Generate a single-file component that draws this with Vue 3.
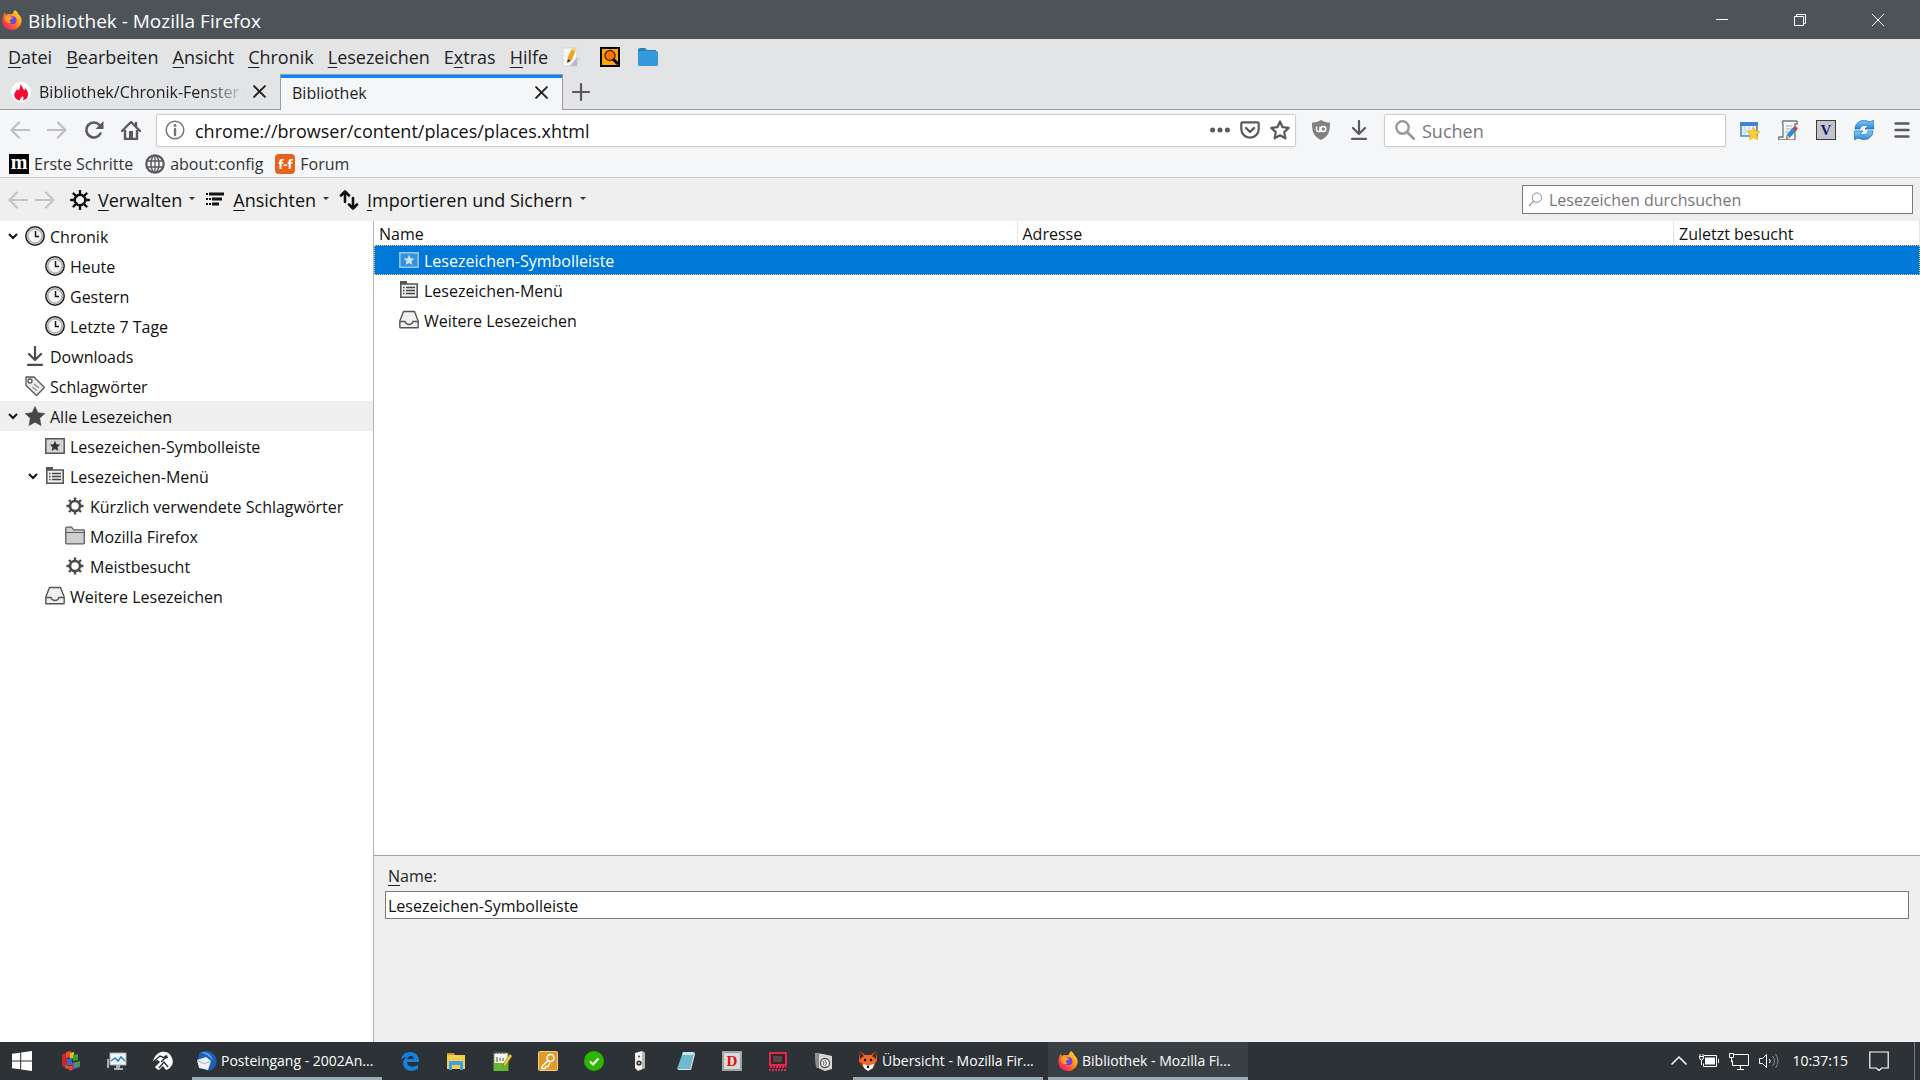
<!-- LibraryWindow.vue -->

<script setup>
import { ref } from 'vue'

// [before, access key, after]
const menus = [
  ['', 'D', 'atei'],
  ['', 'B', 'earbeiten'],
  ['', 'A', 'nsicht'],
  ['', 'C', 'hronik'],
  ['', 'L', 'esezeichen'],
  ['E', 'x', 'tras'],
  ['', 'H', 'ilfe']
]

// a bookmark or pin has either an icon or a lettered badge
const bookmarks = [
  { badge: 'm', kind: 'badge-m', label: 'Erste Schritte' },
  { icon: 'globe', label: 'about:config' },
  { badge: 'f-f', kind: 'badge-forum', label: 'Forum' }
]

const libraryMenus = [
  { icon: 'gear-bold', key: 'V', rest: 'erwalten' },
  { icon: 'views', key: 'A', rest: 'nsichten' },
  { icon: 'import', key: 'I', rest: 'mportieren und Sichern' }
]

const tree = [
  { level: 0, icon: 'clock', label: 'Chronik', open: true },
  { level: 1, icon: 'clock', label: 'Heute' },
  { level: 1, icon: 'clock', label: 'Gestern' },
  { level: 1, icon: 'clock', label: 'Letzte 7 Tage' },
  { level: 0, icon: 'download', label: 'Downloads' },
  { level: 0, icon: 'tag', label: 'Schlagwörter' },
  { level: 0, icon: 'star-full', label: 'Alle Lesezeichen', open: true, current: true },
  { level: 1, icon: 'toolbar', label: 'Lesezeichen-Symbolleiste' },
  { level: 1, icon: 'list', label: 'Lesezeichen-Menü', open: true },
  { level: 2, icon: 'gear', label: 'Kürzlich verwendete Schlagwörter' },
  { level: 2, icon: 'folder', label: 'Mozilla Firefox' },
  { level: 2, icon: 'gear', label: 'Meistbesucht' },
  { level: 1, icon: 'tray', label: 'Weitere Lesezeichen' }
]

const rows = [
  { icon: 'toolbar', label: 'Lesezeichen-Symbolleiste' },
  { icon: 'list', label: 'Lesezeichen-Menü' },
  { icon: 'tray', label: 'Weitere Lesezeichen' }
]

const pinnedLeft = ['blocks', 'monitor', 'gorilla']
const pinnedRight = ['edge', 'explorer', 'notepadpp', 'key', 'check', 'speaker', 'notes', 'letter-d', 'terminal', 'camera']

const selected = ref(0)
const url = ref('chrome://browser/content/places/places.xhtml')
const name = ref('Lesezeichen-Symbolleiste')
</script>

<template>
  <div class="window">
    <svg class="sprite" aria-hidden="true">
      <defs>
        <linearGradient id="fx-flame" x1="1" y1="0" x2="0" y2="1">
          <stop offset="0" stop-color="#fff44f" />
          <stop offset="0.4" stop-color="#ff980e" />
          <stop offset="0.75" stop-color="#ff3647" />
          <stop offset="1" stop-color="#e31587" />
        </linearGradient>
        <linearGradient id="blue-shine" x1="0" y1="0" x2="0" y2="1">
          <stop offset="0" stop-color="#7fd0fb" />
          <stop offset="1" stop-color="#2a86d8" />
        </linearGradient>
      </defs>

      <symbol id="firefox" viewBox="0 0 20 20">
        <path d="M13 0c2 1.500 3 3 3.500 4.500 2 1.500 3.300 4 3.100 6.700C19.200 16.200 15 20 10 20S.4 16.200.3 11C.2 7.500 1.500 4.500 2.800 2.600l.8 2.400C4.500 4 6 3.700 7 4c1.500.3 3 .2 4-.5C11.300 2 12 1 13 0z" fill="url(#fx-flame)" />
        <circle cx="10.500" cy="10.300" r="4" fill="#7542e5" />
        <path d="M3 6.500c2-1.500 4.500-1 6 .5l2 .7c-.5 1.300-2.500 1-3 2.300-.5 1 .2 2 1.500 2.400-2 1.500-5.500.5-6.500-2z" fill="#ffa22b" />
      </symbol>
      <symbol id="flame" viewBox="0 0 20 20">
        <circle cx="10" cy="10" r="10" fill="#fff" />
        <path d="M9 2.500c3.500 2 2.500 5 4.500 5.500.8-.5.500-1.500.2-2.200 3 2.200 4.500 7 2.500 10-1 1.500-2.700 2.400-4.700 2.700 1.200-1.200 1.400-3 .2-4.500-1 1.500-2.700 2-2.700 4.500-3-.4-5.500-2.300-5.700-5C3 10.500 5.500 9 6 7l1.200 1.500C9 7 9.500 5 9 2.500z" fill="#f70d33" />
      </symbol>
      <symbol id="pencil-page" viewBox="0 0 20 20">
        <path d="M1 1h14v18H1z" fill="#f7f7fa" stroke="#d3d4dc" />
        <path d="M8 19l7-9v9z" fill="#b8bac6" />
        <path d="M15 11l4 1-4 4z" fill="#d2d3da" />
        <path d="M5 15l1-5L10 1l4 1-4 11z" fill="#f5a11b" />
        <path d="M10 1l4 1-1 2-4-1z" fill="#ffd98a" />
        <path d="M5 16l1-4 3 2z" fill="#5a3a1a" />
      </symbol>
      <symbol id="finder" viewBox="0 0 20 20">
        <path d="M1 1h18v18H1z" fill="#ffa800" stroke="#000" stroke-width="2" />
        <circle cx="10" cy="8.500" r="5" fill="#ff7300" stroke="#5a2b00" stroke-width="1.500" />
        <path d="M13 12l5 5" stroke="#000" stroke-width="3" />
      </symbol>
      <symbol id="folder-blue" viewBox="0 0 20 20">
        <path d="M0 3q0-2 2-2h5l2 2h9v4H0z" fill="#2980b9" />
        <rect y="4" width="20" height="15" rx="1.500" fill="#3498db" />
      </symbol>
      <symbol id="close" viewBox="0 0 12 12">
        <path d="M1 1l10 10M11 1L1 11" stroke="currentColor" stroke-width="1.800" stroke-linecap="round" />
      </symbol>
      <symbol id="plus" viewBox="0 0 20 20">
        <path d="M10 2v16M2 10h16" stroke="currentColor" stroke-width="2.200" stroke-linecap="round" />
      </symbol>
      <symbol id="back" viewBox="0 0 20 20">
        <path d="M19 10H2M9 2.500L1.500 10 9 17.500" fill="none" stroke="currentColor" stroke-width="2.200" stroke-linecap="round" stroke-linejoin="round" />
      </symbol>
      <symbol id="forward" viewBox="0 0 20 20">
        <path d="M1 10h17M11 2.500l7.500 7.500-7.500 7.500" fill="none" stroke="currentColor" stroke-width="2.200" stroke-linecap="round" stroke-linejoin="round" />
      </symbol>
      <symbol id="reload" viewBox="0 0 20 20">
        <path d="M16.500 13.500A7.500 7.500 0 1 1 15.500 5" fill="none" stroke="currentColor" stroke-width="2.600" stroke-linecap="round" />
        <path d="M19.500 1v8h-8z" fill="currentColor" />
      </symbol>
      <symbol id="home" viewBox="0 0 20 20">
        <path d="M1 11l9-9 9 9M15 3v4" fill="none" stroke="currentColor" stroke-width="2.400" stroke-linecap="round" stroke-linejoin="round" />
        <path d="M4 10v9h12v-9" fill="none" stroke="currentColor" stroke-width="2.400" stroke-linejoin="round" />
        <path d="M8 19v-8h4v8z" fill="currentColor" />
      </symbol>
      <symbol id="info" viewBox="0 0 20 20">
        <circle cx="10" cy="10" r="8.800" fill="none" stroke="currentColor" stroke-width="1.500" />
        <path d="M10 9v6" stroke="currentColor" stroke-width="2.400" stroke-linecap="round" />
        <circle cx="10" cy="5.500" r="1.400" fill="currentColor" />
      </symbol>
      <symbol id="dots" viewBox="0 0 20 20">
        <g fill="currentColor"><circle cx="2.600" cy="10" r="2.500" /><circle cx="10" cy="10" r="2.500" /><circle cx="17.400" cy="10" r="2.500" /></g>
      </symbol>
      <symbol id="pocket" viewBox="0 0 20 20">
        <path d="M2.500 2.300h15q1.200 0 1.200 1.200V9a8.700 8.700 0 0 1-17.400 0V3.500q0-1.200 1.200-1.200z" fill="none" stroke="currentColor" stroke-width="2.200" />
        <path d="M6 8l4 4 4-4" fill="none" stroke="currentColor" stroke-width="2.400" stroke-linecap="round" stroke-linejoin="round" />
      </symbol>
      <symbol id="star" viewBox="0 0 20 20">
        <path d="M10 1.500l2.600 5.700 6.100.7-4.500 4.200 1.200 6.200-5.400-3.100-5.400 3.100 1.200-6.200L1.300 7.900l6.100-.7z" fill="none" stroke="currentColor" stroke-width="2.200" stroke-linejoin="round" />
      </symbol>
      <symbol id="shield" viewBox="0 0 20 20">
        <path d="M10 0c3 2 6 2.500 9 2.500 0 8.500-1 13.500-9 17.500C2 16 1 11 1 2.500 4 2.500 7 2 10 0z" fill="#808080" />
        <path d="M5.500 6.500v3.300q0 1.700 1.700 1.700H9V6.500" fill="none" stroke="#fff" stroke-width="1.500" />
        <circle cx="12.300" cy="9" r="2.500" fill="none" stroke="#fff" stroke-width="1.500" />
      </symbol>
      <symbol id="download" viewBox="0 0 20 20">
        <path d="M10 1v12M4 8l6 6 6-6M3 18.800h14" fill="none" stroke="currentColor" stroke-width="2.200" stroke-linecap="round" stroke-linejoin="round" />
      </symbol>
      <symbol id="search" viewBox="0 0 20 20">
        <circle cx="7.500" cy="7.500" r="6.200" fill="none" stroke="currentColor" stroke-width="2.400" />
        <path d="M12 12l7 7" stroke="currentColor" stroke-width="2.800" stroke-linecap="round" />
      </symbol>
      <symbol id="search-thin" viewBox="0 0 16 16">
        <circle cx="9.500" cy="6" r="5" fill="none" stroke="currentColor" />
        <path d="M6 9.500L1 15" stroke="currentColor" stroke-width="1.200" />
      </symbol>
      <symbol id="calendar-star" viewBox="0 0 20 20">
        <path d="M1 3h16v13H1z" fill="#e9f1fb" stroke="#4a86d0" stroke-width="1.600" />
        <path d="M0 2h18v4H0z" fill="#4381d4" />
        <path d="M5 6v9M9 6v9M13 6v9M2 11h14" stroke="#bcd2ec" />
        <path d="M13.500 7l2 4 4.500.6-3.300 3 .9 5.400-4.100-2.600L9.400 20l.9-5.400-3.300-3 4.500-.6z" fill="#ffcb2e" stroke="#f0a800" stroke-width=".6" />
      </symbol>
      <symbol id="script" viewBox="0 0 20 20">
        <path d="M5 1h13q2 0 1 3h-2v14q0 2-2 2H2q-2 0-1-3h4V4q-1-2 0-3z" fill="#f4f5f7" stroke="#6d7781" stroke-width="1.300" />
        <path d="M8 6h6M8 9h6M7 12h4" stroke="#a3adb8" />
        <path d="M8 19l1-4 7-8 3 2-7 8z" fill="#2f8be0" stroke="#1b5d9e" stroke-width=".7" />
        <path d="M15 8l2-2 3 2-2 3z" fill="#e33b2e" />
        <path d="M8 19l1-4 3 2z" fill="#f2b33d" />
      </symbol>
      <symbol id="sync" viewBox="0 0 20 20">
        <path d="M1 9C1 3 7-1 13 1l3 1 4-2v9h-9l3-3c-4-2-8 0-8 3z" fill="url(#blue-shine)" stroke="#1f74c4" stroke-width=".8" />
        <path d="M19 11c0 6-6 10-12 8l-3-1-4 2v-9h9l-3 3c4 2 8 0 8-3z" fill="url(#blue-shine)" stroke="#1f74c4" stroke-width=".8" />
      </symbol>
      <symbol id="hamburger" viewBox="0 0 20 20">
        <path d="M3.500 3.500h13M3.500 10h13M3.500 16.500h13" stroke="currentColor" stroke-width="2.400" stroke-linecap="round" />
      </symbol>
      <symbol id="globe" viewBox="0 0 20 20">
        <g fill="none" stroke="#5a5a5d">
          <circle cx="10" cy="10" r="8.700" stroke-width="2.200" />
          <ellipse cx="10" cy="10" rx="4" ry="8.500" stroke-width="1.500" />
          <path d="M2 7h16M2 13h16M10 1v18" stroke-width="1.300" />
        </g>
      </symbol>
      <symbol id="gear" viewBox="0 0 20 20">
        <circle cx="10" cy="10" r="5" fill="none" stroke="currentColor" stroke-width="2.600" />
        <path d="M10 1.500v3M10 15.500v3M1.500 10h3M15.500 10h3M4 4l2 2M14 14l2 2M4 16l2-2M14 6l2-2" stroke="currentColor" stroke-width="2.400" />
      </symbol>
      <symbol id="gear-bold" viewBox="0 0 20 20">
        <circle cx="10" cy="10" r="5.300" fill="none" stroke="currentColor" stroke-width="2.400" />
        <path d="M10 1v4M10 15v4M1 10h4M15 10h4M3.600 3.600l3 3M13.500 13.500l3 3M3.600 16.400l3-3M13.500 6.500l3-3" stroke="currentColor" stroke-width="2.400" stroke-linecap="round" />
      </symbol>
      <symbol id="views" viewBox="0 0 20 20">
        <path d="M1 4h2M1 9h2M1 14h2M4 9h2M4 14h2" stroke="currentColor" stroke-width="2" />
        <path d="M4 4h15M7 9h10M7 14h7" stroke="currentColor" stroke-width="3" />
      </symbol>
      <symbol id="import" viewBox="0 0 20 20">
        <path d="M6 12V2M2 5.500L6 1.500l4 4M14 8v10M10 14.500l4 4 4-4" fill="none" stroke="currentColor" stroke-width="2.600" stroke-linecap="round" stroke-linejoin="round" />
      </symbol>
      <symbol id="clock" viewBox="0 0 20 20">
        <circle cx="10" cy="10" r="9.200" fill="#fff" stroke="#1b1b1b" stroke-width="1.500" />
        <circle cx="10" cy="10" r="7.300" fill="#f6f6f6" stroke="#b5b5b5" stroke-width="2" />
        <path d="M10.500 5v5.500H14" fill="none" stroke="#1b1b1b" stroke-width="1.500" />
      </symbol>
      <symbol id="tag" viewBox="0 0 20 20">
        <path d="M1 1h8l10.500 10.500-8 8L1 9.500z" fill="#e9e9e9" stroke="#585858" stroke-width="1.300" stroke-linejoin="round" />
        <circle cx="5" cy="5" r="2" fill="#fff" stroke="#585858" stroke-width="1.300" />
        <path d="M9 8l5 4M7.500 11l4 3.500" stroke="#8a8a8a" stroke-width="1.200" />
      </symbol>
      <symbol id="star-full" viewBox="0 0 20 20">
        <path d="M10 .5l2.800 6.200 7 .8-5.100 4.700L16 19.500l-6-3.300-6 3.300 1.300-7.300L.2 7.500l7-.8z" fill="#474747" stroke="#474747" stroke-width=".6" />
      </symbol>
      <symbol id="toolbar" viewBox="0 0 20 20">
        <path d="M.8 2.800h18.400v14.400H.8z" fill="var(--icon-fill)" stroke="var(--icon-line)" stroke-width="1.500" />
        <path d="M10 4.800l1.500 3.400 3.700.4-2.700 2.600.8 3.800-3.300-1.900-3.300 1.900.8-3.800-2.700-2.600 3.700-.4z" fill="var(--icon-mark)" />
      </symbol>
      <symbol id="list" viewBox="0 0 20 20">
        <path d="M1.800 4h16.400v13.200H1.800z" fill="#efefef" stroke="#555" stroke-width="1.600" />
        <path d="M1 1h7v3H1z" fill="#555" />
        <path d="M4 7.500h1.500M4 10.500h1.500M4 13.500h1.500M7 7.500h9M7 10.500h9M7 13.500h9" stroke="#444" stroke-width="1.300" />
      </symbol>
      <symbol id="folder" viewBox="0 0 20 20">
        <path d="M.8 17V2q0-.8.8-.8h5l2 2.600h10q.7 0 .7.700V17q0 .8-.8.8h-17Q.8 17.800.8 17z" fill="#cfcfcf" stroke="#5d5d5d" stroke-width="1.300" />
        <path d="M1 6.500h18" stroke="#5d5d5d" />
      </symbol>
      <symbol id="tray" viewBox="0 0 20 20">
        <path d="M4.500 1.500h11L19.200 11v6q0 .8-.8.8H1.600q-.8 0-.8-.8v-6z" fill="#efefef" stroke="#555" stroke-width="1.400" stroke-linejoin="round" />
        <path d="M1 11.500h5q1 3 4 3t4-3h5" fill="none" stroke="#555" stroke-width="1.400" />
      </symbol>
      <symbol id="twisty" viewBox="0 0 10 10">
        <path d="M1 3l4 4 4-4" fill="none" stroke="#111" stroke-width="2" />
      </symbol>

      <!-- taskbar -->
      <symbol id="windows" viewBox="0 0 20 20">
        <path d="M0 2.800L8.200 1.700v7.800H0zM9.200 1.500L20 0v9.500H9.200zM0 10.500h8.200v7.800L0 17.200zM9.200 10.500H20V20L9.200 18.500z" fill="#fff" />
      </symbol>
      <symbol id="blocks" viewBox="0 0 20 20">
        <path d="M1 3l5-1v15l-5-2z" fill="#c9252b" />
        <path d="M5 1l5-1v6l-5 1z" fill="#ef4a2e" />
        <path d="M9 2l4-1v6l-4 1z" fill="#e5c51c" />
        <path d="M12 4l5-1v6l-5 1z" fill="#3aa335" />
        <path d="M6 8l5-1v7H6z" fill="#3169c6" />
        <path d="M10 12l9-2v6l-8 3z" fill="#8b3fae" />
        <path d="M13 12l6-2v5l-6 2z" fill="#3f9f4a" />
        <path d="M4 14l7 1v5l-7-3z" fill="#e3482b" />
      </symbol>
      <symbol id="monitor" viewBox="0 0 20 20">
        <path d="M3 2h16v12H3z" fill="#f2f5f7" stroke="#a7b0b6" />
        <path d="M4 10l4-3 3 3 3-4 4 4" fill="none" stroke="#2a7ec7" stroke-width="1.500" />
        <path d="M9 14h4v3h3v2H7v-2h2zM0 8h2v9H0z" fill="#a7b0b6" />
      </symbol>
      <symbol id="gorilla" viewBox="0 0 20 20">
        <path d="M0 10Q2 3 8 1q7-1 10 4 3 5 1 9-2 4-6 5l-3-4-4 4q-3-1-4-3l5-5-2-2z" fill="#fff" />
        <path d="M1 10l6-5 5 2-4 4M6 17l5-6 4 5" fill="none" stroke="#2d3236" stroke-width="1.400" />
        <path d="M11 5l3-1 1 3-3 1z" fill="#2d3236" />
      </symbol>
      <symbol id="thunderbird" viewBox="0 0 20 20">
        <path d="M4 1q9-3 14 4c4 7 0 14-7 15l-6-3C0 13 0 4 4 1z" fill="#1f5fb4" />
        <path d="M0 9l9-3 5 4-3 9-9-2z" fill="#eef2f6" />
        <path d="M0 9l7 4 7-3" fill="none" stroke="#9fb0c2" />
        <path d="M4 1q9-1 12 8l-6-5z" fill="#59a6ee" />
      </symbol>
      <symbol id="edge" viewBox="0 0 20 20">
        <path d="M1 9C2 3 6 1 10 1c6 0 9 4 9 10H7c0 5 6 6 11 3v4c-7 4-15 1-15-6 0-3 2-5 4-6-3 0-5 1-6 3zm6-1h7c0-4-6-4-7 0z" fill="#1382e0" />
      </symbol>
      <symbol id="explorer" viewBox="0 0 20 20">
        <path d="M1 2h6l2 2h10v14H1z" fill="#f7cb4c" />
        <path d="M1 2h6l2 2H1z" fill="#d99a1c" />
        <path d="M3 10h14v9h-3v-5H6v5H3z" fill="#3f9fe4" />
      </symbol>
      <symbol id="notepadpp" viewBox="0 0 20 20">
        <path d="M2 2h14v18H2z" fill="#f7f7f2" stroke="#7f8e6a" />
        <path d="M2 12h14v8H2z" fill="#69b52e" />
        <path d="M3 0v3M6 0v3M9 0v3M12 0v3M5 6v5M8 7v3M11 7v3" stroke="#4b4b4b" />
        <path d="M11 16l1-4 6-9 2 2-6 9z" fill="#f1d53a" stroke="#7d6a10" stroke-width=".6" />
      </symbol>
      <symbol id="key" viewBox="0 0 20 20">
        <rect x=".5" y=".5" width="19" height="19" rx="1" fill="#df9a2b" stroke="#f2cf8d" />
        <circle cx="12.500" cy="7" r="3.500" fill="none" stroke="#fff" stroke-width="1.500" />
        <path d="M10 9.500l-6 6v2h3l1-2h2l2-4" fill="none" stroke="#fff" stroke-width="1.300" />
      </symbol>
      <symbol id="check" viewBox="0 0 20 20">
        <circle cx="10" cy="10" r="10" fill="#2cb600" />
        <path d="M6 10.500l3 3 5.500-6" fill="none" stroke="#fff" stroke-width="2" />
      </symbol>
      <symbol id="speaker" viewBox="0 0 20 20">
        <path d="M5 2l7-2 3 2v15l-7 3-3-3z" fill="#f1f1f1" />
        <path d="M12 0l3 2v15l-3 1z" fill="#b5b5b5" />
        <circle cx="9" cy="12" r="2.600" fill="#333" /><circle cx="9" cy="12" r="1" fill="#ddd" />
        <circle cx="9" cy="5.500" r="1" fill="#444" />
      </symbol>
      <symbol id="notes" viewBox="0 0 20 20">
        <path d="M7 1h11l-4 17H1z" fill="#6fb9cd" />
        <path d="M18 1l1 2-4 16-1-1z" fill="#e4eef1" />
        <path d="M7 1h11l-1 3H6z" fill="#c5e6ee" />
        <path d="M1 18h13l1 1H3z" fill="#dfe8ea" />
      </symbol>
      <symbol id="terminal" viewBox="0 0 20 20">
        <path d="M2 2h16v12H2z" fill="#3a2327" stroke="#e1284c" stroke-width="2" />
        <path d="M5 5h9v6H5z" fill="#54464a" />
        <path d="M2 16h16M1 19h18" stroke="#e1284c" stroke-width="2" stroke-dasharray="2 1" />
      </symbol>
      <symbol id="camera" viewBox="0 0 20 20">
        <path d="M1 2l8 1 9 2v13l-7 2-9-4z" fill="#d6d6d6" />
        <path d="M1 2l4 1v14l-3-1z" fill="#8c8c8c" />
        <circle cx="11" cy="12" r="4.500" fill="#f1f1f1" stroke="#555" stroke-width="1.300" />
        <path d="M11 9q3 3 0 6M9 10q2 2 0 4" fill="none" stroke="#555" />
      </symbol>
      <symbol id="fox" viewBox="0 0 20 20">
        <path d="M2 0l5 4h6l5-4 1 9-3 6-6 5-6-5-3-5z" fill="#f0692a" />
        <path d="M5 13l4 1 1 2 2-2 4-1-1 4-5 3-4-3z" fill="#fff" />
        <path d="M2 0l4 5-4 3zM18 0l-4 5 4 3z" fill="#5b2a16" />
        <path d="M0 11l4 1 1 3z" fill="#8a3a1a" />
        <circle cx="7" cy="9" r="1.200" /><circle cx="13" cy="9" r="1.200" /><circle cx="10" cy="16" r="1.200" />
      </symbol>
      <symbol id="chevron-up" viewBox="0 0 20 20">
        <path d="M2.500 13.500L10 6l7.500 7.500" fill="none" stroke="#fff" stroke-width="1.500" />
      </symbol>
      <symbol id="battery" viewBox="0 0 20 20">
        <path d="M5 4.500h12.500v11H4.500v-3M19.500 8v4M0 5.500h5M1 3v2M4 3v2M.5 6q0 3 2 3t2-3M2.500 9v5" fill="none" stroke="#fff" />
        <path d="M6 6.500h10v7H6z" fill="#fff" />
      </symbol>
      <symbol id="network" viewBox="0 0 20 20">
        <path d="M5 3.500h14.500v11h-16v-5M8 18.500h7M11.500 15v3M.5 2.500h4v4h-4zM2.500 7v4" fill="none" stroke="#fff" />
      </symbol>
      <symbol id="volume" viewBox="0 0 20 20">
        <path d="M.5 7.500h3l4-4v13l-4-4h-3z" fill="none" stroke="#fff" />
        <path d="M10.500 8q1.500 2 0 4" fill="none" stroke="#fff" />
        <path d="M13.500 5q4 5 0 10M16.500 3q5 7 0 14" fill="none" stroke="#8a8e90" />
      </symbol>
      <symbol id="notice" viewBox="0 0 20 20">
        <path d="M.8 1h18.400v16h-6.500L10 19.500 7.300 17H.8z" fill="none" stroke="#fff" stroke-width="1.200" />
      </symbol>
    </svg>

    <header class="titlebar">
      <svg class="icon"><use href="#firefox" /></svg>
      <h1 class="title">Bibliothek - Mozilla Firefox</h1>
      <button class="win-btn" aria-label="Minimieren">
        <svg viewBox="0 0 12 12"><path d="M0 5.500h12" /></svg>
      </button>
      <button class="win-btn" aria-label="Verkleinern">
        <svg viewBox="0 0 12 12"><path d="M.5 2.500h9v9h-9zM2.500 2.500v-2h9v9h-2" /></svg>
      </button>
      <button class="win-btn" aria-label="Schließen">
        <svg viewBox="0 0 12 12"><path d="M0 0l12 12M12 0L0 12" /></svg>
      </button>
    </header>

    <nav class="menubar">
      <button v-for="m in menus" :key="m[1]" class="menu">{{ m[0] }}<u>{{ m[1] }}</u>{{ m[2] }}</button>
      <div class="menu-tools">
        <button aria-label="Notiz"><svg class="icon"><use href="#pencil-page" /></svg></button>
        <button aria-label="Suche"><svg class="icon"><use href="#finder" /></svg></button>
        <button aria-label="Ordner"><svg class="icon"><use href="#folder-blue" /></svg></button>
      </div>
    </nav>

    <div class="tabs">
      <div class="tab first">
        <svg class="icon"><use href="#flame" /></svg>
        <span class="tab-label fade">Bibliothek/Chronik-Fenster als Tab</span>
        <button class="tab-close" aria-label="Tab schließen"><svg><use href="#close" /></svg></button>
      </div>
      <div class="tab active">
        <span class="tab-label">Bibliothek</span>
        <button class="tab-close" aria-label="Tab schließen"><svg><use href="#close" /></svg></button>
      </div>
      <div class="tab-rest">
        <button class="new-tab" aria-label="Neuer Tab"><svg class="icon"><use href="#plus" /></svg></button>
      </div>
    </div>

    <div class="navbar">
      <div class="nav-buttons">
        <button class="off" aria-label="Zurück"><svg class="icon"><use href="#back" /></svg></button>
        <button class="off" aria-label="Vor"><svg class="icon"><use href="#forward" /></svg></button>
        <button aria-label="Neu laden"><svg class="icon"><use href="#reload" /></svg></button>
        <button aria-label="Startseite"><svg class="icon"><use href="#home" /></svg></button>
      </div>
      <div class="field urlbar">
        <svg class="icon info"><use href="#info" /></svg>
        <input v-model="url" aria-label="Adresse" />
        <button aria-label="Aktionen"><svg class="icon"><use href="#dots" /></svg></button>
        <button aria-label="Pocket"><svg class="icon"><use href="#pocket" /></svg></button>
        <button aria-label="Lesezeichen setzen"><svg class="icon"><use href="#star" /></svg></button>
      </div>
      <div class="nav-middle">
        <button aria-label="uBlock"><svg class="icon"><use href="#shield" /></svg></button>
        <button aria-label="Downloads"><svg class="icon"><use href="#download" /></svg></button>
      </div>
      <div class="field searchbar">
        <svg class="icon glass"><use href="#search" /></svg>
        <input placeholder="Suchen" aria-label="Suchen" />
      </div>
      <div class="nav-addons">
        <button aria-label="Kalender"><svg class="icon"><use href="#calendar-star" /></svg></button>
        <button aria-label="Skripte"><svg class="icon"><use href="#script" /></svg></button>
        <button aria-label="Version"><span class="badge badge-v">V</span></button>
        <button aria-label="Synchronisieren"><svg class="icon"><use href="#sync" /></svg></button>
        <button aria-label="Menü"><svg class="icon"><use href="#hamburger" /></svg></button>
      </div>
    </div>

    <nav class="bookmarks">
      <a v-for="b in bookmarks" :key="b.label" href="#">
        <svg v-if="b.icon" class="icon"><use :href="'#' + b.icon" /></svg>
        <span v-else class="badge" :class="b.kind">{{ b.badge }}</span>
        <span>{{ b.label }}</span>
      </a>
    </nav>

    <div class="library-bar">
      <div class="steps">
        <button aria-label="Zurück"><svg class="icon"><use href="#back" /></svg></button>
        <button aria-label="Vor"><svg class="icon"><use href="#forward" /></svg></button>
      </div>
      <button v-for="m in libraryMenus" :key="m.key" class="library-menu">
        <svg class="icon"><use :href="'#' + m.icon" /></svg>
        <span><u>{{ m.key }}</u>{{ m.rest }}</span>
        <i class="caret"></i>
      </button>
      <div class="library-search">
        <svg><use href="#search-thin" /></svg>
        <input placeholder="Lesezeichen durchsuchen" aria-label="Lesezeichen durchsuchen" />
      </div>
    </div>

    <main class="library">
      <ul class="tree">
        <li
          v-for="(n, i) in tree"
          :key="i"
          :class="['level-' + n.level, { current: n.current }]"
        >
          <span class="twisty"><svg v-if="n.open"><use href="#twisty" /></svg></span>
          <svg class="icon"><use :href="'#' + n.icon" /></svg>
          <span class="item-label">{{ n.label }}</span>
        </li>
      </ul>

      <div class="content">
        <div class="list">
          <table>
            <thead>
              <tr>
                <th class="col-name">Name</th>
                <th class="col-address">Adresse</th>
                <th class="col-visited">Zuletzt besucht</th>
              </tr>
            </thead>
            <tbody>
              <tr v-for="(r, i) in rows" :key="r.label" :class="{ selected: i === selected }" @click="selected = i">
                <td>
                  <div class="cell">
                    <svg class="icon"><use :href="'#' + r.icon" /></svg>
                    <span class="item-label">{{ r.label }}</span>
                  </div>
                </td>
                <td></td>
                <td></td>
              </tr>
            </tbody>
          </table>
        </div>
        <form class="details" @submit.prevent>
          <label for="item-name"><u>N</u>ame:</label>
          <input id="item-name" v-model="name" />
        </form>
      </div>
    </main>

    <footer class="taskbar">
      <button class="start" aria-label="Start"><svg class="icon"><use href="#windows" /></svg></button>
      <button v-for="p in pinnedLeft" :key="p" class="pin" :aria-label="p"><svg class="icon"><use :href="'#' + p" /></svg></button>
      <button class="task"><svg class="icon"><use href="#thunderbird" /></svg><span>Posteingang - 2002An...</span></button>
      <button v-for="p in pinnedRight" :key="p" class="pin" :aria-label="p">
        <span v-if="p === 'letter-d'" class="badge badge-d">D</span>
        <svg v-else class="icon"><use :href="'#' + p" /></svg>
      </button>
      <div class="tasks">
        <button class="task"><svg class="icon"><use href="#fox" /></svg><span>Übersicht - Mozilla Fir...</span></button>
        <button class="task running"><svg class="icon"><use href="#firefox" /></svg><span>Bibliothek - Mozilla Fi...</span></button>
      </div>
      <div class="systray">
        <svg class="icon"><use href="#chevron-up" /></svg>
        <svg class="icon"><use href="#battery" /></svg>
        <svg class="icon"><use href="#network" /></svg>
        <svg class="icon"><use href="#volume" /></svg>
        <time>10:37:15</time>
        <svg class="icon notice"><use href="#notice" /></svg>
      </div>
    </footer>
  </div>
</template>

<style>
body {
  margin: 0;
}
</style>

<style scoped>
.window {
  display: flex;
  flex-direction: column;
  min-height: 100vh;
  font-family: "Open Sans", "Noto Sans", sans-serif;
  font-size: 16px;
  line-height: 20px;
  color: #222;
  background: #fff;
  --icon-fill: #d6d6d6;
  --icon-line: #555;
  --icon-mark: #333;
}

.sprite {
  position: absolute;
  width: 0;
  height: 0;
}

.icon {
  flex: none;
  display: block;
  width: 20px;
  height: 20px;
}

button {
  display: flex;
  align-items: center;
  padding: 0;
  border: 0;
  background: none;
  color: inherit;
  font: inherit;
  white-space: nowrap;
}

input {
  flex: 1;
  min-width: 0;
  padding: 0;
  border: 0;
  outline: 0;
  background: none;
  color: #111;
  font: inherit;
}

u {
  text-decoration: underline;
  text-underline-offset: 3px;
}

/* lettered icons */
.badge {
  box-sizing: border-box;
  flex: none;
  display: flex;
  align-items: center;
  justify-content: center;
  width: 20px;
  height: 20px;
  font: bold 15px/18px "Liberation Serif", serif;
}

.badge-v {
  border: 1px solid #3c3c42;
  background: #c3c3c9;
  color: #15157a;
}

.badge-d {
  border: 2px solid #a1a1a1;
  background: #d9d9d9;
  color: #e00f14;
}

.badge-m {
  padding-bottom: 4px;
  background: #000;
  color: #fff;
  font-size: 20px;
}

.badge-forum {
  border-radius: 4px;
  background: #e8621c;
  color: #fff;
  font: bold 13px/18px "Open Sans", sans-serif;
}

/* title and menus */
.titlebar {
  display: flex;
  align-items: center;
  height: 39px;
  padding: 0 3px 0 2px;
  background: #4c545a;
  color: #fff;
}

.title {
  flex: 1;
  margin: 0;
  padding: 3px 0 0 6px;
  font-size: 19px;
  font-weight: 400;
}

.win-btn {
  justify-content: center;
  width: 78px;
  height: 39px;
}

.win-btn svg {
  width: 12px;
  height: 12px;
  fill: none;
  stroke: #fff;
}

.menubar {
  display: flex;
  align-items: center;
  gap: 14px;
  height: 35px;
  padding-left: 8px;
  background: #e3e4e6;
  font-size: 18px;
}

.menu-tools {
  display: flex;
  gap: 18px;
}

/* tabs */
.tabs {
  display: flex;
  height: 36px;
  background: #e3e4e6;
}

.tab {
  box-sizing: border-box;
  display: flex;
  align-items: center;
  width: 283px;
  padding: 0 14px 0 11px;
  border-bottom: 1px solid #9b9b9d;
}

.tab.first {
  width: 280px;
}

.tab.first .icon {
  margin-right: 8px;
}

.tab.active {
  border: 1px solid #9b9b9d;
  border-bottom: 0;
  background: #f5f6f7;
  box-shadow: inset 0 3px #0a84ff;
}

.tab-label {
  flex: 1;
  min-width: 0;
  padding-top: 1px;
  overflow: hidden;
  white-space: nowrap;
}

.fade {
  mask-image: linear-gradient(to right, #000 80%, transparent);
}

.tab-close {
  margin-left: 6px;
}

.tab-close svg {
  width: 13px;
  height: 13px;
}

.tab-rest {
  flex: 1;
  display: flex;
  align-items: center;
  padding-left: 8px;
  border-bottom: 1px solid #9b9b9d;
  color: #5a5a5d;
}

/* navigation */
.navbar {
  display: flex;
  align-items: center;
  height: 40px;
  background: #f5f6f7;
  color: #5a5a5d;
}

.nav-buttons {
  display: flex;
  gap: 17px;
  padding: 0 15px 0 10px;
}

.off {
  color: #bfbfc1;
}

.field {
  box-sizing: border-box;
  display: flex;
  align-items: center;
  height: 33px;
  border: 1px solid #ccc;
  border-radius: 2px;
  background: #fff;
  box-shadow: 0 1px 3px rgba(0, 0, 0, 0.06);
  font-size: 18px;
}

.field input {
  padding-top: 1px;
}

.urlbar {
  flex: 1;
  gap: 10px;
  padding: 0 5px 0 8px;
}

.info {
  color: #757578;
}

.nav-middle {
  display: flex;
  gap: 18px;
  padding: 0 15px;
}

.searchbar {
  width: 342px;
  gap: 7px;
  padding: 0 10px;
}

.glass {
  color: #999;
}

input::placeholder {
  color: #777;
  opacity: 1;
}

.nav-addons {
  display: flex;
  gap: 18px;
  padding: 0 8px 0 14px;
}

.bookmarks {
  display: flex;
  align-items: center;
  gap: 12px;
  height: 27px;
  padding-left: 9px;
  border-bottom: 1px solid #c9cacb;
  background: #f5f6f7;
}

.bookmarks a {
  display: flex;
  align-items: center;
  gap: 5px;
  color: #333;
  text-decoration: none;
}

/* library toolbar */
.library-bar {
  display: flex;
  align-items: center;
  height: 43px;
  padding: 0 7px 0 8px;
  background: #efefef;
  color: #111;
  font-size: 18px;
}

.steps {
  display: flex;
  gap: 7px;
  padding-right: 5px;
  color: #c4c4c4;
}

.library-menu {
  gap: 8px;
  margin-left: 10px;
}

.caret {
  margin: -2px 0 0 -1px;
  border: 3px solid transparent;
  border-top-color: #333;
  border-bottom-width: 0;
}

.library-search {
  box-sizing: border-box;
  display: flex;
  align-items: center;
  gap: 6px;
  width: 391px;
  height: 29px;
  margin-left: auto;
  padding-left: 5px;
  border: 1px solid #7a7a7a;
  background: #fff;
  color: #8a8a8a;
  font-size: 16px;
}

.library-search svg {
  width: 15px;
  height: 15px;
}

/* tree and list */
.library {
  flex: 1;
  display: flex;
}

.tree {
  width: 373px;
  margin: 0;
  padding: 0;
  border-right: 1px solid #a9b7c9;
  list-style: none;
}

.tree li {
  display: flex;
  align-items: center;
  gap: 5px;
  height: 30px;
  color: #111;
}

.tree .icon {
  color: #4a4a4a;
}

.item-label {
  padding-top: 2px;
}

.level-0 {
  padding-left: 8px;
}

.level-1 {
  padding-left: 28px;
}

.level-2 {
  padding-left: 48px;
}

.current {
  background: #efefef;
}

.twisty {
  width: 12px;
}

.twisty svg {
  display: block;
  width: 10px;
  height: 10px;
}

.content {
  flex: 1;
  display: flex;
  flex-direction: column;
}

.list {
  flex: 1;
}

table {
  width: 100%;
  border-collapse: collapse;
  table-layout: fixed;
  color: #111;
}

th {
  box-sizing: border-box;
  height: 24px;
  padding: 2px 5px 0;
  border-right: 1px solid #e5e5e5;
  font-weight: 400;
  text-align: left;
}

.col-name {
  width: 643px;
}

.col-visited {
  width: 246px;
}

td {
  height: 30px;
  padding: 0 0 0 25px;
}

.cell {
  display: flex;
  align-items: center;
  gap: 5px;
}

.selected {
  outline: 1px dotted #f5c66a;
  outline-offset: -1px;
  background: #0078d7;
  color: #fff;
  --icon-fill: #3393df;
  --icon-line: #99c9ef;
  --icon-mark: #cce4f7;
}

.details {
  display: flex;
  flex-direction: column;
  gap: 5px;
  height: 176px;
  padding: 10px 11px 0;
  border-top: 1px solid #a0a0a0;
  background: #efefef;
}

.details label {
  padding-left: 3px;
}

.details input {
  flex: none;
  height: 25px;
  padding: 1px 2px 0;
  border: 1px solid #7a7a7a;
  background: #fff;
}

/* taskbar */
.taskbar {
  display: flex;
  align-items: center;
  height: 38px;
  background: #2d3236;
  color: #fff;
  font-size: 14px;
}

.start,
.pin {
  justify-content: center;
  width: 46px;
  height: 38px;
}

.start {
  width: 44px;
  margin-right: 4px;
}

.task {
  box-sizing: border-box;
  gap: 4px;
  width: 190px;
  height: 38px;
  margin: 0 5px 0 6px;
  padding: 3px 5px 0;
  border-bottom: 3px solid #9aabb5;
}

.tasks {
  display: flex;
}

.tasks .task {
  margin-right: 0;
}

.tasks .running {
  width: 200px;
  margin-left: 5px;
  padding-left: 10px;
  background: #394044;
}

.systray {
  display: flex;
  align-items: center;
  gap: 10px;
  height: 38px;
  margin-left: auto;
  margin-right: 5px;
  padding-right: 25px;
  border-right: 1px solid #777b7e;
}

.systray time {
  margin-left: 4px;
}

.notice {
  margin-left: 11px;
}
</style>
